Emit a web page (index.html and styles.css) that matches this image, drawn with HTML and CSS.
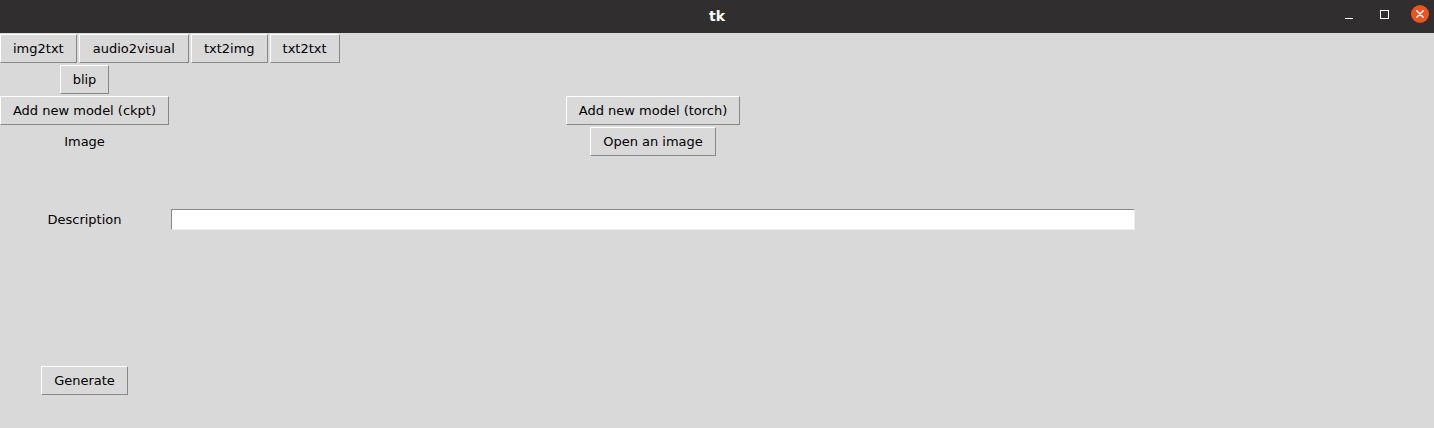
FILE: index.html
```html
<!DOCTYPE html>
<html>
<head>
<meta charset="utf-8">
<link rel="stylesheet" href="styles.css">
</head>
<body>
<div class="titlebar">
  <div class="title">tk</div>
  <div class="controls">
    <span class="ctl min"></span>
    <span class="ctl max"></span>
    <span class="ctl close">
      <svg width="18" height="18" viewBox="0 0 18 18"><circle cx="9" cy="9" r="9" fill="#e95420"/><path d="M5.8 5.8 L12.2 12.2 M12.2 5.8 L5.8 12.2" stroke="#fff" stroke-width="1.6" stroke-linecap="round"/></svg>
    </span>
  </div>
</div>
<div class="app">
  <div class="tabs">
    <button class="btn">img2txt</button>
    <button class="btn wide">audio2visual</button>
    <button class="btn">txt2img</button>
    <button class="btn">txt2txt</button>
  </div>
  <div class="row r2">
    <div class="cell"><button class="btn">blip</button></div>
  </div>
  <div class="row r3">
    <div class="cell"><button class="btn">Add new model (ckpt)</button></div>
    <div></div>
    <div class="cell"><button class="btn">Add new model (torch)</button></div>
  </div>
  <div class="row r4">
    <div class="cell label">Image</div>
    <div></div>
    <div class="cell"><button class="btn">Open an image</button></div>
  </div>
  <div class="desc">
    <div class="cell label">Description</div>
    <div class="entry"></div>
  </div>
  <div class="row gen">
    <div class="cell"><button class="btn">Generate</button></div>
  </div>
</div>
</body>
</html>
```

FILE: styles.css
```css
html, body {
  margin: 0;
  padding: 0;
}
body {
  width: 1434px;
  height: 428px;
  background: #d9d9d9;
  font-family: "DejaVu Sans", "Liberation Sans", sans-serif;
  font-size: 13px;
  color: #000;
  overflow: hidden;
}
.titlebar {
  height: 33px;
  background: #302e2e;
  display: flex;
  align-items: center;
  justify-content: center;
  position: relative;
}
.title {
  color: #fff;
  font-weight: bold;
  font-size: 14px;
  font-family: "DejaVu Sans", sans-serif;
  margin-top: -2px;
}
.controls {
  position: absolute;
  right: 5px;
  top: 5px;
  display: flex;
  align-items: center;
  height: 18px;
}
.ctl {
  display: block;
}
.min {
  width: 8px;
  height: 0;
  border-top: 1.5px solid #fff;
  margin-top: 9px;
  margin-right: 27px;
}
.max {
  width: 7px;
  height: 7px;
  border: 1.5px solid #fff;
  margin-right: 22px;
}
.close {
  width: 18px;
  height: 18px;
}
.close svg {
  display: block;
}
.app {
  padding-top: 1px;
}
.btn {
  font-family: "DejaVu Sans", "Liberation Sans", sans-serif;
  font-size: 13px;
  color: #000;
  background: #d9d9d9;
  height: 29px;
  padding: 0 12px;
  margin: 0;
  border-style: solid;
  border-width: 1px;
  border-color: #ffffff #888888 #888888 #ffffff;
  border-radius: 0;
  box-sizing: border-box;
  white-space: nowrap;
  line-height: 27px;
}
.tabs {
  display: flex;
  gap: 2px;
  height: 29px;
}
.tabs .wide {
  padding: 0 13px;
}
.row {
  display: grid;
  grid-template-columns: 169px 397px 174px;
  height: 29px;
}
.cell {
  display: flex;
  justify-content: center;
  align-items: center;
}
.r2 { margin-top: 2px; }
.r3 { margin-top: 2px; }
.r3 .btn { width: 100%; padding: 0; }
.r4 { margin-top: 2px; }
.label {
  line-height: 15px;
}
.desc {
  display: grid;
  grid-template-columns: 169px 964px;
  column-gap: 2px;
  align-items: center;
  height: 22px;
  margin-top: 52px;
}
.entry {
  background: #fff;
  border-style: solid;
  border-width: 1px;
  border-color: #888888 #eeeeee #eeeeee #888888;
  box-sizing: border-box;
  height: 21px;
}
.gen { margin-top: 136px; }
```
